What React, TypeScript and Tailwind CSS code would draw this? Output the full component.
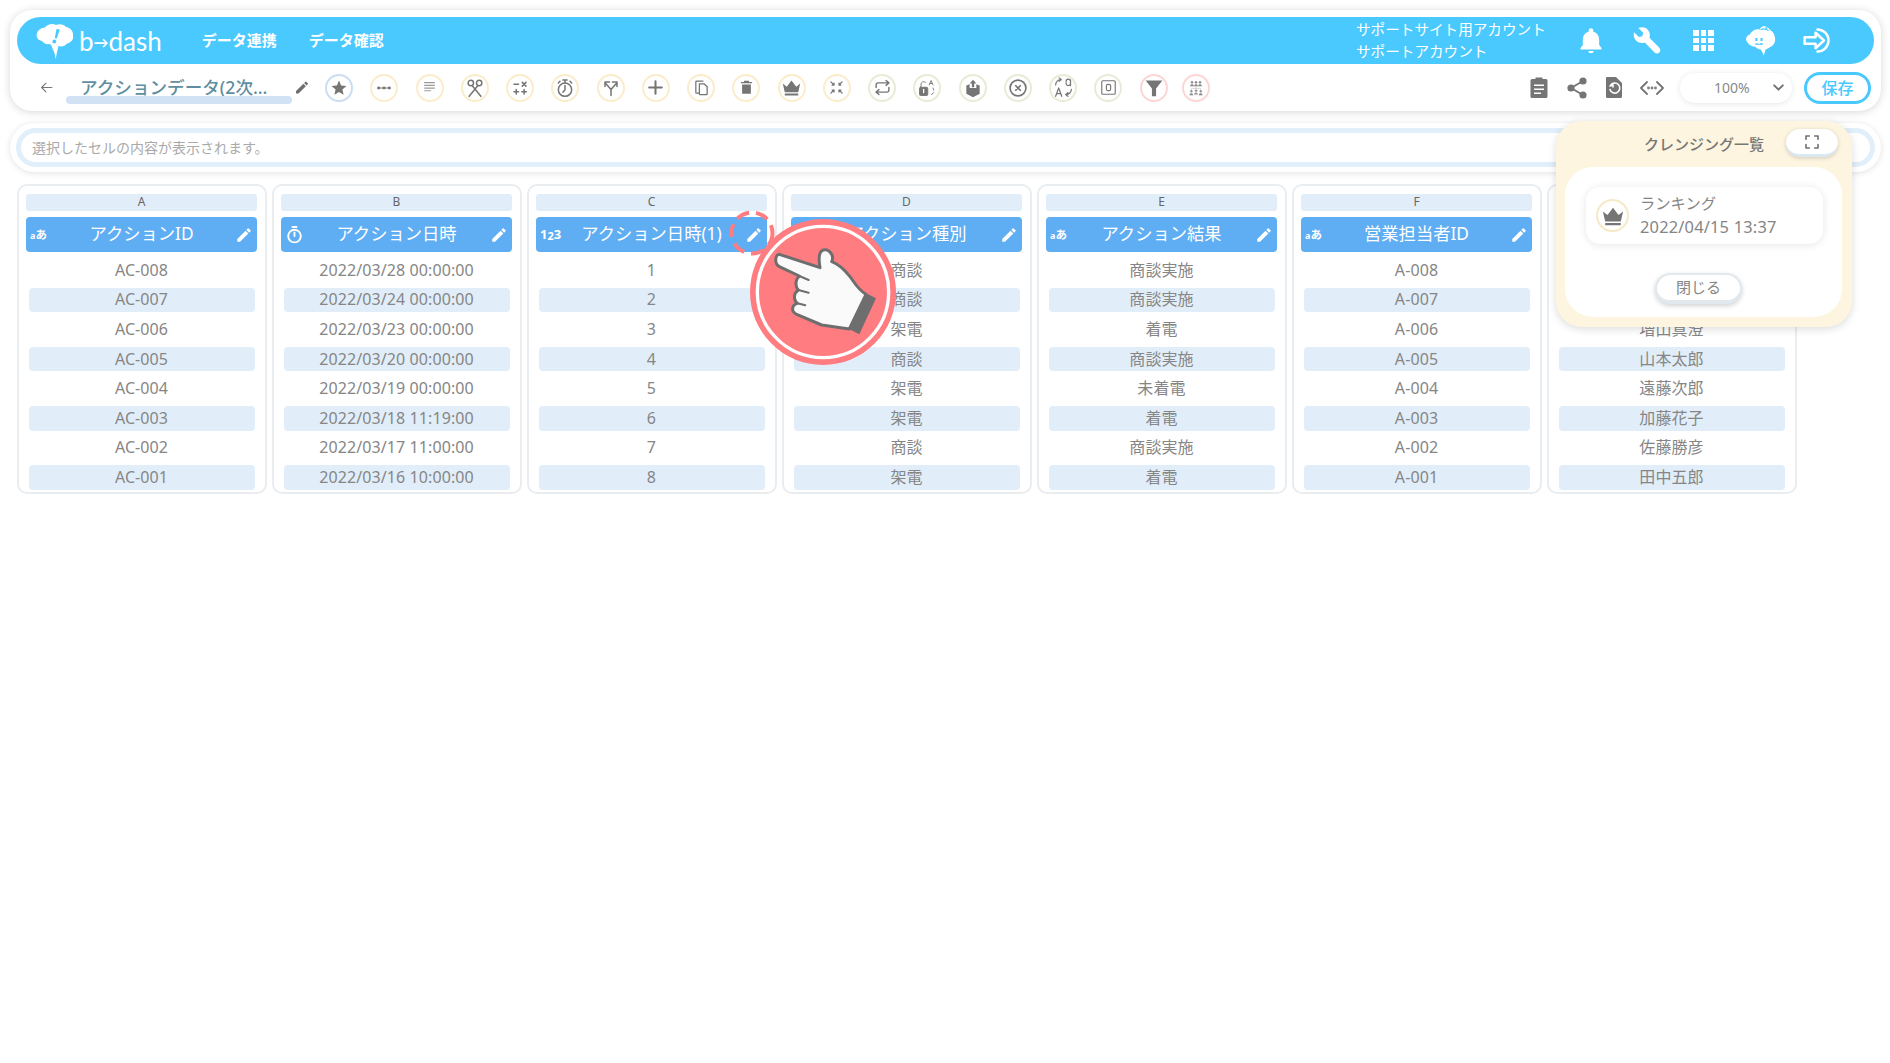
import React from "react";

const G = "#757575";

function Sv({ s = 16, children, fill = "none", stroke = G, sw = 2 }: { s?: number; children: React.ReactNode; fill?: string; stroke?: string; sw?: number }) {
  return (
    <svg width={s} height={s} viewBox="0 0 24 24" fill={fill} stroke={stroke} strokeWidth={sw} strokeLinecap="round" strokeLinejoin="round">
      {children}
    </svg>
  );
}

const toolIcons: { ring: string; icon: React.ReactNode }[] = [
  { ring: "border-[#c9def2]", icon: <Sv s={18} fill={G} stroke="none"><path d="M12 17.27L18.18 21l-1.64-7.03L22 9.24l-7.19-.61L12 2 9.19 8.63 2 9.24l5.46 4.73L5.82 21z" /></Sv> },
  { ring: "border-[#fbeccb]", icon: <Sv s={16} sw={1.6}><path d="M3 12h18" /><circle cx="4" cy="12" r="1.4" fill={G} /><circle cx="12" cy="12" r="1.4" fill={G} /><circle cx="20" cy="12" r="1.4" fill={G} /></Sv> },
  { ring: "border-[#fbeccb]", icon: <Sv s={13} stroke="#9a9a9a" sw={2.2}><path d="M3 3h18M3 8h18M3 13h18M3 18h11" /></Sv> },
  { ring: "border-[#fbeccb]", icon: <Sv s={20} sw={1.8}><circle cx="7" cy="6" r="3.2" /><circle cx="17" cy="6" r="3.2" /><path d="M8.5 9L19 22M15.5 9L5 22" /></Sv> },
  { ring: "border-[#fbeccb]", icon: <Sv s={18} sw={2}><path d="M4 7h6M15 4.500l5 5M20 4.500l-5 5M4 17h6M7 14v6M14.500 17h6M17.500 14v6" /></Sv> },
  { ring: "border-[#fbeccb]", icon: <Sv s={20} sw={1.8}><circle cx="12" cy="14" r="8" /><path d="M12 9v5l-2.500 3M9.500 2.500h5M12 2.500V6M4 6l2 -2M20 6l-2 -2" /></Sv> },
  { ring: "border-[#fbeccb]", icon: <Sv s={18} sw={2}><path d="M12 22v-8L5 6M12 14l7-8M4 10V4h6M20 10V4h-6" /></Sv> },
  { ring: "border-[#fbeccb]", icon: <Sv s={19} sw={2.6}><path d="M12 4v16M4 12h16" /></Sv> },
  { ring: "border-[#fbeccb]", icon: <Sv s={17} sw={1.8}><path d="M8 20H5a1 1 0 0 1-1-1V4a1 1 0 0 1 1-1h9" /><path d="M9 7h7l4 4v10a1 1 0 0 1-1 1H10a1 1 0 0 1-1-1z" /></Sv> },
  { ring: "border-[#fbeccb]", icon: <Sv s={15} fill={G} stroke="none"><path d="M8 1h8v2h5v2H3V3h5zM5 7h14v14a1 1 0 0 1-1 1H6a1 1 0 0 1-1-1z" /></Sv> },
  { ring: "border-[#fbeccb]", icon: <Sv s={19} fill={G} stroke="none"><path d="M1 7l5 4 6-8 6 8 5-4-2.500 11h-17zM3.500 19.500h17V22h-17z" /></Sv> },
  { ring: "border-[#fbeccb]", icon: <Sv s={15} sw={2}><path d="M3 3l5 5M8 5v3H5M21 3l-5 5M16 5v3h3M3 21l5-5M8 19v-3H5M21 21l-5-5M16 19v-3h3" /></Sv> },
  { ring: "border-[#e7ecd6]", icon: <Sv s={17} sw={2}><path d="M17 2l4 3.500-4 3.500M3 12V8a2.500 2.500 0 0 1 2.500-2.500H21M7 22l-4-3.500L7 15M21 12v4a2.500 2.500 0 0 1-2.500 2.500H3" /></Sv> },
  { ring: "border-[#e7ecd6]", icon: <Sv s={18} sw={1.2}><rect x="2" y="11" width="11" height="11" rx="1.500" fill={G} /><path d="M4 11V7a3.500 3.500 0 0 1 6-2.400M15 8l2.500-6 2.500 6M16 6h3M20 12l1 3M21 18l-3 3" /><path d="M7.500 14v4" stroke="#fff" strokeWidth="1.800" /></Sv> },
  { ring: "border-[#e7ecd6]", icon: <Sv s={20} fill={G} stroke="none"><path d="M4 9l4-1.600V12h8V7.400L20 9v10l-8 4-8-4z" /><path d="M12 2l4 4.500h-2.600V11h-2.800V6.500H8z" /></Sv> },
  { ring: "border-[#e7ecd6]", icon: <Sv s={20} sw={2}><circle cx="12" cy="12" r="9.500" /><path d="M9.300 9.300l5.400 5.400M14.700 9.300l-5.400 5.400" /></Sv> },
  { ring: "border-[#e7ecd6]", icon: <Sv s={21} sw={1.4}><path d="M3 22l3.500-9.500L10 22M4.200 19h4.600M3 9a6 6 0 0 1 6-6M7 1l2.500 2L7 5M21 14a6 6 0 0 1-6 6M17 18l-2.500 2 2.500 2M15 6.500a2.600 2.600 0 1 0 5 0M20 3.500V10M15 5a2.500 2.500 0 0 1 5 0" /></Sv> },
  { ring: "border-[#e7ecd6]", icon: <Sv s={17} sw={1.600}><rect x="2.500" y="2.500" width="19" height="19" rx="1.500" /><rect x="9" y="7.500" width="6" height="9" rx="2.500" /></Sv> },
  { ring: "border-[#fdd5d5]", icon: <Sv s={20} fill={G} stroke="none"><path d="M2 3h20l-7.500 9.500V22h-5v-9.500z" /></Sv> },
  { ring: "border-[#fdd5d5]", icon: <Sv s={16} fill="#8a8a8a" stroke="#8a8a8a" sw={0.5}><circle cx="6" cy="3.500" r="1.700" /><circle cx="12" cy="3.500" r="1.700" /><circle cx="18" cy="3.500" r="1.700" /><path d="M3.500 9a2.500 2.500 0 0 1 5 0zM9.500 9a2.500 2.500 0 0 1 5 0zM15.500 9a2.500 2.500 0 0 1 5 0z" /><path d="M12 10v3M5 15v-2h14v2" fill="none" /><circle cx="5" cy="17" r="1.500" /><circle cx="19" cy="17" r="1.500" /><circle cx="12" cy="16" r="1.500" /><path d="M2.500 22.500a2.500 2.500 0 0 1 5 0zM16.500 22.500a2.500 2.500 0 0 1 5 0zM9.500 21.500a2.500 2.500 0 0 1 5 0z" /></Sv> },
];

function Pencil({ c = "#fff", s = 18 }: { c?: string; s?: number }) {
  return (
    <Sv s={s} fill={c} stroke="none">
      <path d="M3 17.250V21h3.750L17.810 9.940l-3.750-3.750L3 17.250zM20.710 7.040a1 1 0 0 0 0-1.410l-2.340-2.340a1 1 0 0 0-1.410 0l-1.830 1.830 3.750 3.750 1.830-1.830z" />
    </Sv>
  );
}

function TextType() {
  return (
    <span className="text-[11.500px] font-bold text-white leading-none whitespace-nowrap">
      <span className="text-[9px]">a</span>あ
    </span>
  );
}
function NumType() {
  return (
    <span className="text-[13px] font-bold text-white leading-none whitespace-nowrap">
      1<span className="relative top-[1px] text-[11px]">2</span>3
    </span>
  );
}
function TimeType() {
  return (
    <Sv s={19} stroke="#fff" sw={2.400}>
      <circle cx="12" cy="14" r="8" />
      <path d="M12 9.500V14M9.500 2.500h5" />
    </Sv>
  );
}

type Col = { l: string; title?: string; type?: React.ReactNode; rows: string[] };
const cols: Col[] = [
  { l: "A", title: "アクションID", type: <TextType />, rows: ["AC-008", "AC-007", "AC-006", "AC-005", "AC-004", "AC-003", "AC-002", "AC-001"] },
  { l: "B", title: "アクション日時", type: <TimeType />, rows: ["2022/03/28 00:00:00", "2022/03/24 00:00:00", "2022/03/23 00:00:00", "2022/03/20 00:00:00", "2022/03/19 00:00:00", "2022/03/18 11:19:00", "2022/03/17 11:00:00", "2022/03/16 10:00:00"] },
  { l: "C", title: "アクション日時(1)", type: <NumType />, rows: ["1", "2", "3", "4", "5", "6", "7", "8"] },
  { l: "D", title: "アクション種別", type: <TextType />, rows: ["商談", "商談", "架電", "商談", "架電", "架電", "商談", "架電"] },
  { l: "E", title: "アクション結果", type: <TextType />, rows: ["商談実施", "商談実施", "着電", "商談実施", "未着電", "着電", "商談実施", "着電"] },
  { l: "F", title: "営業担当者ID", type: <TextType />, rows: ["A-008", "A-007", "A-006", "A-005", "A-004", "A-003", "A-002", "A-001"] },
  { l: "", rows: ["", "", "増山真澄", "山本太郎", "遠藤次郎", "加藤花子", "佐藤勝彦", "田中五郎"] },
];

function Column({ c }: { c: Col }) {
  return (
    <div className="w-[250px] h-[310px] shrink-0 border-2 border-[#e9edf0] rounded-[10px] pt-[8px] pl-[7px] pr-[8px]">
      <div className="h-[17px] bg-[#e1eef9] rounded-[3px] flex items-center justify-center pb-[2px] text-[12px] text-[#666] leading-none">{c.l}</div>
      <div className="mt-[6px] h-[35px] bg-[#5fadf2] rounded-[4px] grid grid-cols-[40px_1fr_40px] items-center">
        <div className="pl-[4px] flex items-center">{c.type}</div>
        <div className="text-center text-[17.300px] text-white leading-none whitespace-nowrap pb-[2px]">{c.title}</div>
        <div className="flex justify-end pr-[4px]">{c.title ? <Pencil /> : null}</div>
      </div>
      <div className="mt-[6px] flex flex-col gap-[5px] px-[2.500px]">
        {c.rows.map((r, i) => (
          <div key={i} className={"h-[24.600px] rounded-[4px] flex items-center justify-center pb-[1px] text-[16px] tracking-[0.1px] text-[#868686] leading-none " + (i % 2 === 1 ? "bg-[#e1eef9]" : "")}>
            {r}
          </div>
        ))}
      </div>
    </div>
  );
}

function Logo() {
  return (
    <svg width="38" height="36" viewBox="0 0 38 36">
      <path
        fill="#fff"
        d="M9 4.500C11 1 17 0 20 2c3-1.500 8-1 10 2 4 .5 7.500 4 7 8.500 1 4-2.500 7.500-6 8-2 3-6 3.500-8.500 2.500-.5 2-1 4-1.500 6-.4 2-.8 5-1.300 7-.6-3-1-6-2.200-8.500-2-3-1-5-4-6.500-3 .5-6-.5-7.500-3C1.500 17 .3 14 .7 11 1.300 7.500 5 4.500 9 4.500z"
      />
      <path d="M20.500 6l3.300.5-3 9-2-.3z" fill="#4ac9ff" />
      <circle cx="18.300" cy="18.500" r="1.900" fill="#4ac9ff" />
    </svg>
  );
}

function Mascot() {
  return (
    <svg width="32" height="34" viewBox="0 0 30 32">
      <path
        fill="#fff"
        d="M5 9c2-3 6-5 9-4 1-2 3-4 6-3 1 .5 3 1.500 4 3 3 1.500 5 5 5 8 1 4-2 8-5 9-1 1-3 1.500-4 2-.5 2-1 4-2 6-.5-2-1.500-4-3-6-2 0-4-1-5-2.500-4 0-8-3-9-7 0-2 1-4 4-5z"
      />
      <path d="M10 13h2v3h-2zM15 13h2v3h-2zM9 19c2-1 3-1 4.500-.2 1.500-.8 3-.8 5 .2-2 1-3.500 1-5 .3-1.500.7-2.500.7-4.500-.3z" fill="#4ac9ff" />
      <path d="M15 5c2-1 5-1 8 1M20 2.500l1.500 2.500" stroke="#4ac9ff" strokeWidth="1" fill="none" />
    </svg>
  );
}

function Hand() {
  return (
    <svg width="170" height="155" viewBox="0 0 510 465" className="absolute left-[740px] top-[215px]">
      <circle cx="249" cy="231" r="219" fill="#ff7c80" />
      <circle cx="249" cy="231" r="197" fill="none" stroke="#fff" strokeWidth="10" />
      <path
        d="M118 118C105 120 102 145 118 155L178 183C165 195 165 215 175 225C160 235 160 255 172 265C155 270 152 290 170 298L245 330L328 342L378 238C355 225 345 205 330 185C310 160 290 145 275 140C285 120 265 100 250 105C235 110 235 130 240 158Z"
        fill="#fafafa"
        stroke="#6e6e6e"
        strokeWidth="9"
        strokeLinejoin="round"
      />
      <path d="M178 183L206 195M175 225L206 233M172 265L196 271" fill="none" stroke="#6e6e6e" strokeWidth="6" strokeLinecap="round" />
      <path d="M378 235L408 250L358 358L326 341Z" fill="#6e6e6e" />
    </svg>
  );
}

export default function App() {
  return (
    <div
      className="relative w-[1890px] h-[1063px] bg-white overflow-hidden pt-[10px]"
      style={{ fontFamily: '"Noto Sans","Noto Sans CJK JP",sans-serif' }}
    >
      {/* top card */}
      <div className="ml-[10px] w-[1871px] h-[101px] rounded-[22px] bg-white shadow-[0_1px_8px_rgba(0,0,0,0.16)] pt-[7px]">
        <div className="ml-[7px] w-[1857px] h-[47px] rounded-full bg-[#4ac9ff] flex items-center pl-[19px] pr-[41px] text-white">
          <Logo />
          <span className="ml-[5px] text-[26px] leading-none whitespace-nowrap" style={{ fontFamily: "Lato,sans-serif" }}>
            b<span className="text-[15px] font-bold relative top-[-3px]">→</span>dash
          </span>
          <span className="ml-[40px] text-[15px] font-bold">データ連携</span>
          <span className="ml-[32px] text-[15px] font-bold">データ確認</span>
          <div className="ml-auto mb-[2px] text-[14.600px] leading-[22px] w-[190px] whitespace-nowrap">
            <div>サポートサイト用アカウント</div>
            <div>サポートアカウント</div>
          </div>
          <div className="ml-[27px] flex items-center gap-[25px]">
            <div className="w-[32px] pl-[3px] flex justify-center">
              <Sv s={28} fill="#fff" stroke="none"><path d="M12 22.500a2.500 2.500 0 0 0 2.400-2h-4.800a2.500 2.500 0 0 0 2.400 2zM19 15.500V11c0-3.400-1.800-6.200-5-7V3a2 2 0 0 0-4 0v1C6.800 4.800 5 7.600 5 11v4.500L3 18v1.200h18V18z" /></Sv>
            </div>
            <div className="w-[32px] flex justify-center">
              <Sv s={32} fill="#fff" stroke="none"><path d="M3 5.500l3.700 3.500 2.500-.6.700-2.500L6.300 2.200c2.500-1 5.300-.5 7 1.300 1.500 1.600 2 3.800 1.300 6L22 17c1 1 1 2.600 0 3.600s-2.600 1-3.600 0l-7.300-7.400c-2.300.8-4.700.3-6.400-1.300-1.700-1.700-2.300-4.300-1.700-6.400z" /></Sv>
            </div>
            <div className="w-[32px] pl-[1px] flex justify-center">
              <div className="grid grid-cols-3 gap-[2px]">
                {[0, 1, 2, 3, 4, 5, 6, 7, 8].map((i) => (
                  <div key={i} className="w-[5.500px] h-[5.500px] bg-white" />
                ))}
              </div>
            </div>
            <div className="w-[32px] pl-[1px] flex justify-center"><Mascot /></div>
            <div className="w-[32px] flex justify-center">
              <Sv s={31} stroke="#fff" sw={1.900}><path d="M12 3.500a8.500 8.500 0 1 1 0 17" /><path d="M2 9.500h8.500V6l6.500 6-6.500 6v-3.500H2z" /></Sv>
            </div>
          </div>
        </div>
        {/* toolbar */}
        <div className="h-[47px] flex items-center pl-[30px] pr-[10px]">
          <Sv s={13} stroke="#777" sw={2}><path d="M22 12H3M11 4l-8 8 8 8" /></Sv>
          <div className="ml-[13px] mt-[5px] w-[226px] flex flex-col">
            <div className="h-[20px] pl-[14px] pt-[1px] text-[17.600px] leading-[20px] text-[#5f8ea0] font-medium whitespace-nowrap">アクションデータ(2次...</div>
            <div className="h-[8px] rounded-full bg-[#d0e2f3]" />
          </div>
          <div className="ml-[2px] w-[16px] flex justify-center"><Pencil c="#707070" s={17} /></div>
          <div className="ml-[15px] flex items-center gap-[17.250px]">
            {toolIcons.map((t, i) => (
              <div key={i} className={"w-[28px] h-[28px] rounded-full border-2 bg-white flex items-center justify-center " + t.ring + (i === 19 ? " -ml-[3px]" : "")}>
                {t.icon}
              </div>
            ))}
          </div>
          <div className="ml-auto flex items-center gap-[13.500px]">
            <div className="w-[24px] flex justify-center">
              <Sv s={29} fill={G} stroke="none">
                <path d="M5 3.500h3.500V2h7v1.500H19a1.500 1.500 0 0 1 1.500 1.500v16a1.500 1.500 0 0 1-1.500 1.500H5A1.500 1.500 0 0 1 3.500 21V5A1.500 1.500 0 0 1 5 3.500z" />
                <path d="M7 9h10v1.600H7zM7 13h10v1.600H7zM7 17h7v1.600H7z" fill="#fff" />
              </Sv>
            </div>
            <div className="w-[24px] flex justify-center">
              <Sv s={26} stroke={G} sw={2} fill={G}><path d="M18 5L6 12l12 7" fill="none" /><circle cx="18" cy="5" r="2.600" /><circle cx="6" cy="12" r="2.600" /><circle cx="18" cy="19" r="2.600" /></Sv>
            </div>
            <div className="w-[24px] flex justify-center">
              <Sv s={29} fill={G} stroke="none">
                <path d="M5 1.500h9l6 6V21a1.500 1.500 0 0 1-1.500 1.500h-13.500A1.500 1.500 0 0 1 4 21V2.500a1 1 0 0 1 1-1z" />
                <path d="M8 10.500l3-1v2M8.500 10a5 5 0 1 1-.5 4" fill="none" stroke="#fff" strokeWidth="1.600" />
              </Sv>
            </div>
            <div className="w-[24px] flex justify-center">
              <Sv s={24} sw={1.800}>
                <path d="M7 6l-6 6 6 6M17 6l6 6-6 6" />
                <circle cx="8.500" cy="12" r=".5" fill={G} /><circle cx="12" cy="12" r=".5" fill={G} /><circle cx="15.500" cy="12" r=".5" fill={G} />
              </Sv>
            </div>
          </div>
          <div className="ml-[16.500px] w-[112px] h-[30px] rounded-full bg-white shadow-[0_1px_6px_rgba(0,0,0,0.1)] flex items-center justify-between pl-[34px] pr-[7px] text-[14px] text-[#8a8a8a]">
            <span>100%</span>
            <Sv s={13} stroke="#707070" sw={3.500}><path d="M4 8l8 8 8-8" /></Sv>
          </div>
          <div className="ml-[12px] w-[67px] h-[32px] rounded-full border-[3px] border-[#4ac9ff] flex items-center justify-center text-[16px] font-medium text-[#4ac9ff]">保存</div>
        </div>
      </div>

      {/* formula bar */}
      <div className="mt-[12px] ml-[10px] w-[1871px] h-[49px] rounded-[25px] bg-white shadow-[0_1px_6px_rgba(0,0,0,0.12)] pt-[5px] px-[6px]">
        <div className="h-[39px] rounded-full border-[5px] border-[#e1effa] bg-white flex items-center pl-[11px] text-[14px] text-[#aaaaaa]">
          選択したセルの内容が表示されます。
        </div>
      </div>

      {/* columns */}
      <div className="mt-[12px] ml-[17px] flex gap-[5px]">
        {cols.map((c, i) => (
          <Column key={i} c={c} />
        ))}
      </div>

      {/* dashed target */}
      <svg width="46" height="46" viewBox="0 0 46 46" className="absolute left-[729px] top-[210px]">
        <circle cx="23" cy="23" r="20.500" fill="none" stroke="#ff7c80" strokeWidth="4" strokeDasharray="13 7" />
      </svg>
      <Hand />

      {/* cleansing popup */}
      <div className="absolute left-[1556px] top-[121px] w-[296px] h-[206px] rounded-[26px] bg-[#fdf5e0] shadow-[0_2px_8px_rgba(0,0,0,0.14)]">
        <div className="relative h-[46px] flex items-center justify-center text-[15px] font-medium text-[#777]">
          クレンジング一覧
          <div className="absolute right-[14px] top-[8px] w-[52px] h-[28px] rounded-full bg-white border-b-[3px] border-[#dbe8f2] shadow-[0_1px_4px_rgba(0,0,0,0.18)] flex items-center justify-center">
            <Sv s={16} stroke="#707070" sw={2.400}><path d="M3 8V3h5M16 3h5v5M21 16v5h-5M8 21H3v-5" /></Sv>
          </div>
        </div>
        <div className="ml-[9px] w-[277px] h-[150px] rounded-[28px] bg-white pt-[20px] pl-[21px]">
          <div className="w-[237px] h-[57px] rounded-[14px] bg-white shadow-[0_1px_8px_rgba(0,0,0,0.1)] flex items-center pl-[10px]">
            <div className="w-[33px] h-[33px] rounded-full border-2 border-[#f6e9c6] flex items-center justify-center">
              <Sv s={22} fill={G} stroke="none"><path d="M1 7l5 4 6-8 6 8 5-4-2.500 11h-17zM3.500 19.500h17V22h-17z" /></Sv>
            </div>
            <div className="ml-[11px] mb-[2px] flex flex-col text-[#858585] leading-[24px]">
              <span className="text-[15.300px]">ランキング</span>
              <span className="text-[16.400px] tracking-[0.2px]">2022/04/15 13:37</span>
            </div>
          </div>
          <div className="ml-[69px] mt-[29px] w-[87px] h-[31px] rounded-full bg-white border-2 border-[#e1e9ee] border-b-[4px] shadow-[0_2px_5px_rgba(0,0,0,0.18)] flex items-center justify-center text-[15px] text-[#858585]">
            閉じる
          </div>
        </div>
      </div>
    </div>
  );
}
